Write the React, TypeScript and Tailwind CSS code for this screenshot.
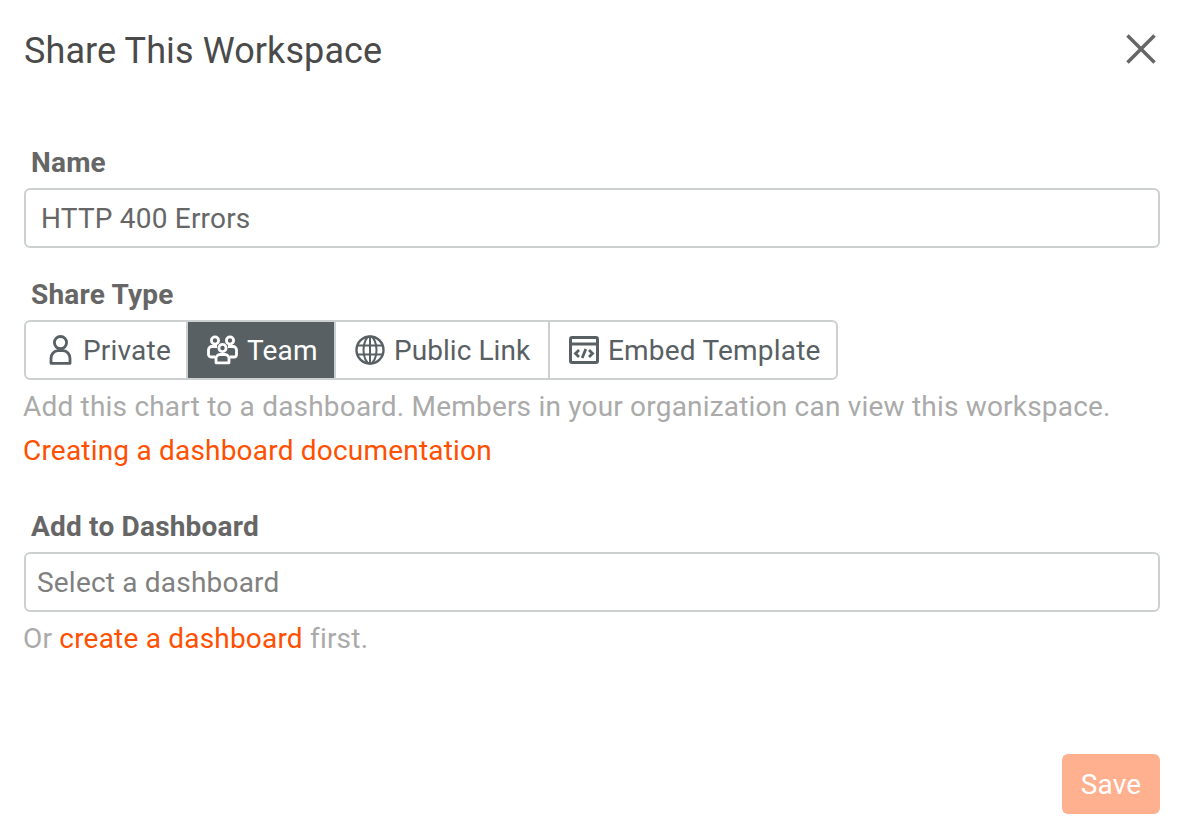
import React from 'react';

const PersonIcon = () => (
    <svg viewBox="0 0 24 30" fill="none" stroke="currentColor" strokeWidth={2.8} className="w-[24px] h-[30px]">
        <circle cx="12.500" cy="7.600" r="6.100" />
        <path d="M3 28.300v-4.800c0-4.300 3-7.800 7-7.800h5c4 0 7 3.500 7 7.800v4.800z" strokeLinejoin="round" />
    </svg>
);

const TeamIcon = () => (
    <svg viewBox="0 0 32 30" fill="none" stroke="currentColor" strokeWidth={2.800} className="w-[32px] h-[30px]">
        <circle cx="9" cy="5.500" r="3.600" />
        <circle cx="24" cy="5.500" r="3.600" />
        <circle cx="16.500" cy="13" r="3.600" />
        <path d="M9 22H5A2.500 2.500 0 0 1 2.500 19.500v-4.500A3.500 3.500 0 0 1 6 11.500h5" />
        <path d="M24 22h4a2.500 2.500 0 0 0 2.500-2.500v-4.500a3.500 3.500 0 0 0-3.500-3.500h-5" />
        <path d="M10 27.800v-4.300a4 4 0 0 1 4-4h5a4 4 0 0 1 4 4v4.300z" strokeLinejoin="round" />
    </svg>
);

const GlobeIcon = () => (
    <svg viewBox="0 0 30 30" fill="none" stroke="currentColor" strokeWidth={2} className="w-[30px] h-[30px]">
        <circle cx="15" cy="15" r="13.500" strokeWidth={2.400} />
        <ellipse cx="15" cy="15" rx="6.500" ry="13.500" />
        <path d="M15 1.500v27M2 10.500h26M2 19.500h26" />
    </svg>
);

const EmbedIcon = () => (
    <svg viewBox="0 0 30 28" fill="none" stroke="currentColor" className="w-[30px] h-[28px]">
        <rect x="1.500" y="1.500" width="27" height="25" rx="1.500" strokeWidth={3} />
        <path d="M1 8h28" strokeWidth={3} />
        <path d="M10 14l-3.500 3.500 3.500 3.500M20 14l3.500 3.500-3.500 3.500M16.800 13l-3.600 9" strokeWidth={2.800} />
    </svg>
);

const App: React.FC = () => {
    return (
        <div className="w-[1186px] h-[834px] bg-white font-['Roboto',sans-serif] flex flex-col pl-6 pr-[26px] overflow-hidden">
            {/* Header */}
            <div className="h-[100px] flex items-center justify-between shrink-0">
                <h1 className="text-[36px] leading-none tracking-[0.1px] text-[#4a4a4a] pt-[1px]">Share This Workspace</h1>
                <svg viewBox="0 0 30 30" stroke="#666" strokeWidth={3.500} className="w-[30px] h-[30px] mr-[4px] -mt-[3px]">
                    <path d="M1.500 1.500l27 27M28.500 1.500l-27 27" />
                </svg>
            </div>

            {/* Name */}
            <div className="pl-[7px] mt-[47px] h-[30px] flex items-center pt-[2px] text-[28px] tracking-[0.2px] font-bold text-[#666]">Name</div>
            <div className="mt-[11px] h-[60px] rounded-[6px] border-2 border-[#ccd0d0] flex items-center pl-[15px] pt-[2px] text-[28px] tracking-[0.2px] text-[#666]">HTTP 400 Errors</div>

            {/* Share Type */}
            <div className="pl-[7px] mt-[31px] h-[30px] flex items-center pt-[2px] text-[28px] tracking-[0.2px] font-bold text-[#666]">Share Type</div>
            <div className="mt-[11px] h-[60px] flex self-start rounded-[6px] border-2 border-[#ccd0d0] text-[28px] tracking-[0.2px] text-[#596063]">
                <div className="w-[160px] flex items-center pl-[22px] gap-[11px] rounded-l-[4px]">
                    <PersonIcon />
                    <span className="pt-[2px]">Private</span>
                </div>
                <div className="w-[150px] flex items-center pl-[18px] gap-[9px] bg-[#596063] text-white border-x-2 border-[#ccd0d0]">
                    <TeamIcon />
                    <span className="pt-[2px]">Team</span>
                </div>
                <div className="w-[214px] flex items-center pl-[19px] gap-[9px] border-r-2 border-[#ccd0d0]">
                    <GlobeIcon />
                    <span className="pt-[2px] tracking-[0.05px]">Public Link</span>
                </div>
                <div className="w-[286px] flex items-center pl-[19px] gap-[9px]">
                    <EmbedIcon />
                    <span className="pt-[2px]">Embed Template</span>
                </div>
            </div>
            <p className="-ml-[1px] mt-[11px] h-[30px] flex items-center pt-[2px] text-[28px] tracking-[0.2px] text-[#aaa] whitespace-nowrap">Add this chart to a dashboard. Members in your organization can view this workspace.</p>
            <a className="-ml-[1px] mt-[14px] h-[30px] flex items-center pt-[2px] text-[28px] tracking-[0.2px] text-[#ff4f00]">Creating a dashboard documentation</a>

            {/* Add to Dashboard */}
            <div className="pl-[7px] mt-[46px] h-[30px] flex items-center pt-[2px] text-[28px] tracking-[0.2px] font-bold text-[#666]">Add to Dashboard</div>
            <div className="mt-[11px] h-[60px] rounded-[6px] border-2 border-[#ccd0d0] flex items-center pl-[11px] pt-[2px] text-[28px] tracking-[0.2px] text-[#808080]">Select a dashboard</div>
            <p className="-ml-[1px] mt-[11px] h-[30px] flex items-center pt-[2px] text-[28px] tracking-[0.2px] text-[#aaa] whitespace-pre">Or <span className="text-[#ff4f00]">create a dashboard</span> first.</p>

            {/* Footer */}
            <div className="flex justify-end mt-[101px]">
                <button className="w-[98px] h-[60px] rounded-[6px] bg-[#ffb08f] text-white pt-[2px] text-[28px] tracking-[0.2px] flex items-center justify-center">Save</button>
            </div>
        </div>
    );
};

export default App;
